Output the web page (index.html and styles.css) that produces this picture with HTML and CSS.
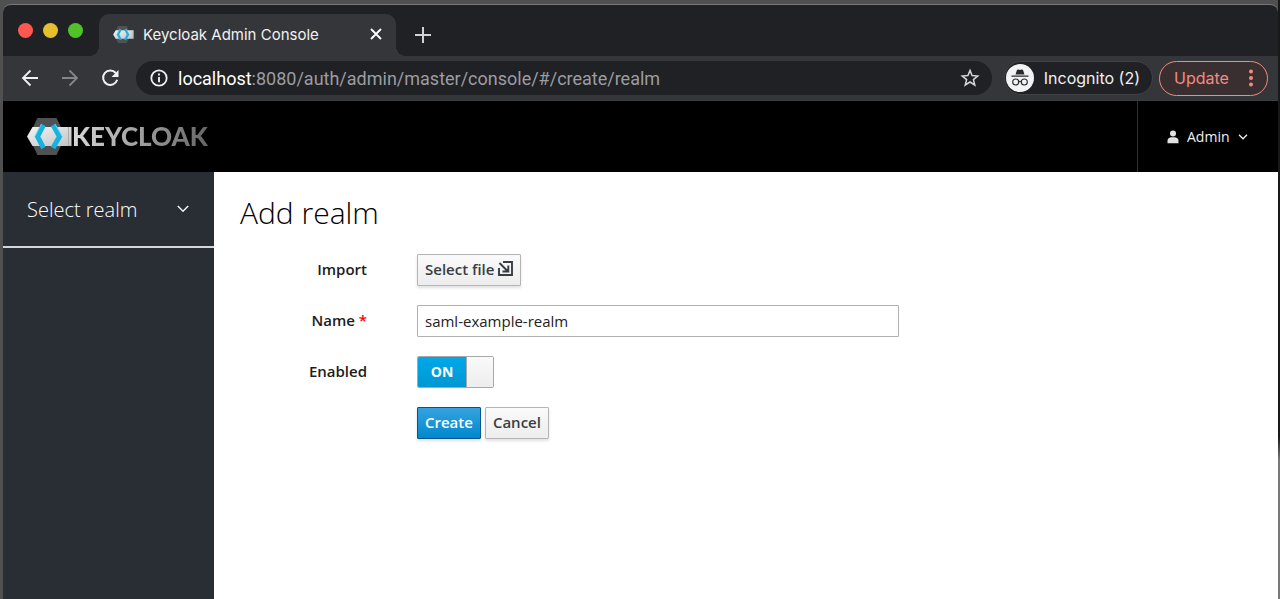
FILE: index.html
```html
<!DOCTYPE html>
<html lang="en">
<head>
<meta charset="utf-8">
<title>Keycloak Admin Console</title>
<link rel="stylesheet" href="styles.css">
</head>
<body>
<svg class="defs" aria-hidden="true">
  <defs>
    <linearGradient id="silver" x1="0" y1="0" x2="1" y2="1">
      <stop offset="0" stop-color="#f4f4f4"/><stop offset="1" stop-color="#c2c2c2"/>
    </linearGradient>
    <symbol id="keycloak" viewBox="0 0 45 37">
      <path d="M10.500 0h19l9 18.500-9 18.500h-19L1.500 18.500z" fill="#505152"/>
      <path d="M5.500 9h39v19h-39L0 18.500z" fill="url(#silver)"/>
      <path d="M16.500 7 10.500 18.500l6 11.500M26 7l6.500 11.500L26 30" fill="none" stroke="#16b3df" stroke-width="5"/>
      <path d="M14.500 6 8 18.500M28 6l7 12.500" fill="none" stroke="#62d5f2" stroke-width="1"/>
      <path d="M41.500 9v19" stroke="#aaa" stroke-width="1"/>
    </symbol>
  </defs>
</svg>
<div class="window">
  <div class="tabstrip">
    <div class="lights"><span class="light red"></span><span class="light yellow"></span><span class="light green"></span></div>
    <div class="tab">
      <svg class="favicon" aria-hidden="true"><use href="#keycloak"/></svg>
      <span class="tab-title">Keycloak Admin Console</span>
      <button class="plain" aria-label="Close tab"><svg width="12" height="12" viewBox="0 0 12 12"><path d="m1 1 10 10M11 1 1 11" stroke="#fff" stroke-width="1.800"/></svg></button>
    </div>
    <button class="plain new-tab" aria-label="New tab"><svg width="16" height="16" viewBox="0 0 16 16"><path d="M8 0v16M0 8h16" stroke="#d0d2d6" stroke-width="2"/></svg></button>
  </div>
  <div class="toolbar">
    <div class="nav">
      <button class="plain" aria-label="Back"><svg width="18" height="18" viewBox="0 0 18 18" fill="none" stroke="#f1f1f1" stroke-width="1.800"><path d="M17 9H2M9.500 1.500 2 9l7.500 7.500"/></svg></button>
      <button class="plain" aria-label="Forward"><svg width="18" height="18" viewBox="0 0 18 18" fill="none" stroke="#85868a" stroke-width="1.800"><path d="M1 9h15M8.500 1.500 16 9l-7.500 7.500"/></svg></button>
      <button class="plain" aria-label="Reload"><svg width="18" height="18" viewBox="0 0 18 18"><path d="M14.800 4A7.200 7.200 0 1 0 16.200 10.800" fill="none" stroke="#f1f1f1" stroke-width="2"/><path d="M17.500 1v7h-7z" fill="#f1f1f1"/></svg></button>
    </div>
    <div class="address">
      <svg width="18" height="18" viewBox="0 0 18 18"><circle cx="9" cy="9" r="7.700" fill="none" stroke="#f1f1f1" stroke-width="1.800"/><path d="M9 8v5.200M9 4.600v2" stroke="#f1f1f1" stroke-width="1.900"/></svg>
      <span class="url"><span class="host">localhost</span>:8080/auth/admin/master/console/#/create/realm</span>
      <button class="plain" aria-label="Bookmark"><svg width="20" height="20" viewBox="0 0 20 20"><path d="m10 2.400 2.100 5.200 5.600.4-4.300 3.600 1.400 5.400-4.800-3-4.800 3 1.400-5.400L2.300 8l5.600-.4z" fill="none" stroke="#d5d6d9" stroke-width="1.500"/></svg></button>
    </div>
    <div class="incognito">
      <svg width="28" height="28" viewBox="0 0 28 28"><circle cx="14" cy="14" r="14" fill="#f1f3f4"/><path d="m9.500 10.500 1.400-4.300q.4-1 1.400-.7l1.700.5 1.700-.5q1-.3 1.400.7l1.400 4.300zM5.500 11.500h17v1.200h-17z" fill="#26282b"/><g fill="none" stroke="#26282b" stroke-width="1.100"><circle cx="9.700" cy="18" r="3"/><circle cx="18.300" cy="18" r="3"/><path d="M12.700 17.700q1.300-1 2.600 0"/></g></svg>
      <span>Incognito (2)</span>
    </div>
    <button class="update"><span>Update</span><svg width="4" height="18" viewBox="0 0 4 18" fill="#f28b82"><circle cx="2" cy="2.500" r="2"/><circle cx="2" cy="9" r="2"/><circle cx="2" cy="15.500" r="2"/></svg></button>
  </div>
  <header class="masthead">
    <a class="brand" href="#"><svg class="mark" aria-hidden="true"><use href="#keycloak"/></svg><span class="wordmark">KEYCLOAK</span></a>
    <button class="account">
      <svg width="12" height="14" viewBox="0 0 12 14" fill="#e2e2e2"><circle cx="6" cy="3.500" r="3"/><path d="M.5 13.300V11q0-3.300 3.500-3.800h4q3.500.5 3.500 3.800v2.300z"/></svg>
      <span>Admin</span>
      <svg width="10" height="6" viewBox="0 0 10 6"><path d="m1 .8 4 4L9 .8" fill="none" stroke="#f1f1f1" stroke-width="1.300"/></svg>
    </button>
  </header>
  <div class="body">
    <nav class="sidebar">
      <button class="realm"><span>Select realm</span><svg width="12" height="8" viewBox="0 0 12 8"><path d="m.8 1 5.200 5.300L11.200 1" fill="none" stroke="#f1f1f1" stroke-width="1.500"/></svg></button>
    </nav>
    <main class="content">
      <h1>Add realm</h1>
      <form class="form">
        <label for="import">Import</label>
        <div><button type="button" id="import" class="btn">Select file <svg width="15" height="15" viewBox="0 0 15 15" fill="none" stroke="#383d45" stroke-width="1.900"><path d="M5 1h9v13H1V7M1.500 2l8 8M10.300 4.500v6H4.500"/></svg></button></div>
        <label for="name">Name <span class="required">*</span></label>
        <input id="name" class="field" type="text" value="saml-example-realm">
        <label for="enabled">Enabled</label>
        <label class="switch"><input id="enabled" type="checkbox" checked><span class="on">ON</span><span class="knob"></span></label>
        <div class="actions"><button type="button" class="btn primary">Create</button><button type="button" class="btn">Cancel</button></div>
      </form>
    </main>
  </div>
</div>
</body>
</html>
```
FILE: styles.css
```css
* { box-sizing: border-box; }
body {
  margin: 0;
  min-height: 100vh;
  display: flex;
  padding: 4px 2px 0 3px;
  background: linear-gradient(#181918 437px, #777977 460px) right / 2px 100% no-repeat, #505050;
  font-family: "Open Sans", sans-serif;
  font-size: 14px;
}
button { font: inherit; cursor: pointer; }
.defs { position: absolute; width: 0; height: 0; }
.plain { display: flex; padding: 0; border: 0; background: none; }
.window {
  flex: 1;
  display: flex;
  flex-direction: column;
  border-top: 1px solid #77787a;
  border-radius: 8px 8px 0 0;
  overflow: hidden;
  background: #202124;
}
.tabstrip {
  display: flex;
  height: 51px;
  padding-left: 15px;
  font-family: Inter, sans-serif;
}
.lights { display: flex; gap: 10px; padding-top: 18px; width: 81px; }
.light { width: 15px; height: 15px; border-radius: 50%; }
.red { background: #fe5750; }
.yellow { background: #e5bf2c; }
.green { background: #52c22b; }
.tab {
  position: relative;
  display: flex;
  align-items: center;
  width: 297px;
  margin-top: 9px;
  padding: 0 14px 2px;
  border-radius: 10px 10px 0 0;
  background: #35363a;
  color: #f1f1f1;
}
.tab::before, .tab::after {
  content: "";
  position: absolute;
  bottom: 0;
  width: 10px;
  height: 10px;
}
.tab::before { left: -10px; background: radial-gradient(circle at 0 0, transparent 10px, #35363a 10px); }
.tab::after { right: -10px; background: radial-gradient(circle at 100% 0, transparent 10px, #35363a 10px); }
.favicon { width: 21px; height: 17px; margin-right: 9px; }
.tab-title { flex: 1; font-size: 15px; white-space: nowrap; }
.new-tab { align-self: center; margin: 9px 0 0 19px; }
.toolbar {
  display: flex;
  align-items: center;
  height: 45px;
  padding: 0 10px 0 18px;
  border-bottom: 1px solid #3b3c3f;
  background: #35363a;
  font-family: Roboto, sans-serif;
  font-size: 18px;
}
.nav { display: flex; align-items: center; gap: 22px; width: 115px; }
.address {
  flex: 1;
  display: flex;
  align-items: center;
  height: 34px;
  padding: 0 12px 0 14px;
  border-radius: 17px;
  background: #202124;
}
.url { flex: 1; margin-left: 10px; color: #9b9da1; white-space: nowrap; }
.host { color: #fff; }
.incognito {
  display: flex;
  align-items: center;
  gap: 10px;
  height: 34px;
  margin: 0 6px 0 12px;
  padding: 0 12px 0 1px;
  border: 1px solid #414246;
  border-radius: 17px;
  background: #202124;
  color: #f1f1f1;
  font-family: Inter, sans-serif;
  font-size: 16px;
  white-space: nowrap;
}
.update {
  display: flex;
  align-items: center;
  justify-content: space-between;
  width: 109px;
  height: 35px;
  padding: 0 14px;
  border: 1px solid #f28b82;
  border-radius: 18px;
  background: #392f31;
  color: #f28b82;
  font-family: Inter, sans-serif;
  font-size: 16px;
}
.masthead {
  display: flex;
  justify-content: space-between;
  height: 71px;
  padding-left: 24px;
  background: #000;
}
.brand { display: flex; align-items: center; padding-bottom: 1px; text-decoration: none; }
.mark { width: 45px; height: 37px; }
.wordmark {
  font: 900 26px/32px Lato, sans-serif;
  background: linear-gradient(90deg, #d8d8d8, #666);
  background-clip: text;
  color: transparent;
}
.account {
  display: flex;
  align-items: center;
  width: 141px;
  padding: 0 0 0 29px;
  border: 0;
  border-left: 1px solid #303030;
  background: none;
  color: #f1f1f1;
  font-size: 14px;
}
.account span { margin: 0 8px 0 8px; }
.body { flex: 1; display: flex; }
.sidebar { width: 211px; background: #292e34; }
.realm {
  display: flex;
  align-items: center;
  justify-content: space-between;
  width: 100%;
  height: 76px;
  padding: 0 25px 0 24px;
  border: 0;
  border-bottom: 2px solid #d5d5de;
  background: none;
  color: #fff;
  font-size: 20px;
  font-weight: 300;
}
.content { flex: 1; padding: 20px 26px; background: #fff; color: #1c1c1c; }
h1 { margin: 0 0 20px; font-size: 30px; line-height: 42px; font-weight: 300; color: #000; }
.form {
  display: grid;
  grid-template-columns: 127px minmax(0, 482px);
  column-gap: 50px;
  row-gap: 19px;
  font-weight: 600;
  font-size: 15px;
  line-height: 20px;
}
.form > label:not(.switch) { align-self: center; padding-bottom: 2px; text-align: right; }
.required { color: #f00; }
.btn {
  height: 32px;
  padding: 0 7px 2px;
  border: 1px solid #b5b5b5;
  border-radius: 1px;
  background: linear-gradient(#fafafa, #ededed);
  box-shadow: 0 2px 3px rgba(0, 0, 0, 0.12);
  color: #383d45;
}
.btn svg { vertical-align: -1px; }
.primary {
  border-color: #00558f;
  background: linear-gradient(#35a3df, #0088ce);
  color: #fff;
}
.field {
  height: 32px;
  width: 100%;
  padding: 0 7px;
  border: 1px solid #b0b0b0;
  border-radius: 1px;
  font: 400 15px "Open Sans", sans-serif;
  color: #222;
}
.switch {
  position: relative;
  display: flex;
  width: 77px;
  height: 32px;
  border: 1px solid #a8a8a8;
  border-radius: 2px;
  overflow: hidden;
}
.switch input { position: absolute; inset: 0; width: 100%; height: 100%; margin: 0; opacity: 0; }
.on {
  width: 48px;
  background: linear-gradient(#00a8e8, #0097d3);
  color: #fff;
  font-size: 14px;
  font-weight: 700;
  line-height: 30px;
  text-align: center;
}
.knob { flex: 1; border-left: 1px solid #a8a8a8; background: linear-gradient(#fafafa, #ededed); }
.actions { grid-column: 2; display: flex; gap: 4px; }
```
